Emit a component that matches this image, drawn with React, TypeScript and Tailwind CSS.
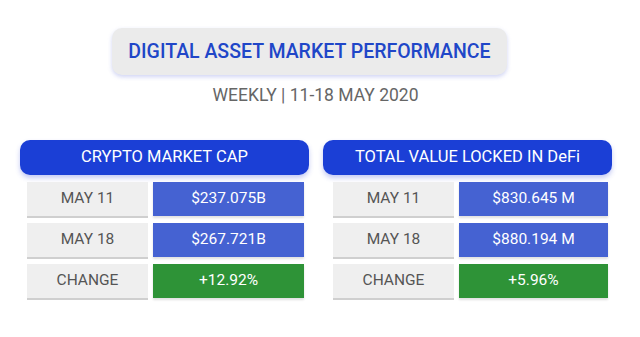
import React from 'react';

const panels = [
  {
    title: 'CRYPTO MARKET CAP',
    rows: [
      { label: 'MAY 11', value: '$237.075B' },
      { label: 'MAY 18', value: '$267.721B' },
      { label: 'CHANGE', value: '+12.92%', change: true },
    ],
  },
  {
    title: 'TOTAL VALUE LOCKED IN DeFi',
    rows: [
      { label: 'MAY 11', value: '$830.645 M' },
      { label: 'MAY 18', value: '$880.194 M' },
      { label: 'CHANGE', value: '+5.96%', change: true },
    ],
  },
];

function Panel({ title, rows, inset }) {
  return (
    <div className="w-[289px]">
      <div className="h-[35px] rounded-[10px] bg-[#1b3fd6] shadow-[0_3px_5px_rgba(60,80,220,0.3)] flex items-center justify-center text-white text-[16.5px]">
        {title}
      </div>
      <div className={`mt-[7px] flex flex-col gap-[7px] ${inset}`}>
        {rows.map((row) => (
          <div key={row.label} className="flex gap-[5px] h-[34px]">
            <div className="w-[121px] bg-[#efefef] shadow-[0_2px_0_#cfcfcf] flex items-center justify-center text-[#555] text-[15.5px]">
              {row.label}
            </div>
            <div
              className={`flex-1 flex items-center justify-center text-white text-[15.5px] ${
                row.change ? 'bg-[#2e9337]' : 'bg-[#4562d2]'
              } shadow-[0_2px_2px_rgba(0,0,0,0.12)]`}
            >
              {row.value}
            </div>
          </div>
        ))}
      </div>
    </div>
  );
}

export default function App() {
  return (
    <div className="w-[640px] h-[337px] bg-white font-['Roboto',sans-serif] overflow-hidden">
      <div className="pt-[28px] flex flex-col">
        <div className="flex justify-center pr-[21px]">
          <div className="w-[395px] h-[47px] rounded-[10px] bg-[#ebebeb] shadow-[0_2px_4px_rgba(150,160,230,0.45)] flex items-center justify-center text-[#2046c8] text-[19.5px] font-medium">
            DIGITAL ASSET MARKET PERFORMANCE
          </div>
        </div>
        <div className="mt-[8px] flex justify-center pr-[9px] text-[#666] text-[17.5px] leading-[24px]">
          WEEKLY | 11-18 MAY 2020
        </div>
      </div>
      <div className="mt-[33px] flex pl-[20px] gap-[14px]">
        <Panel title={panels[0].title} rows={panels[0].rows} inset="pl-[7px] pr-[5px]" />
        <Panel title={panels[1].title} rows={panels[1].rows} inset="pl-[10px] pr-[4px]" />
      </div>
    </div>
  );
}
